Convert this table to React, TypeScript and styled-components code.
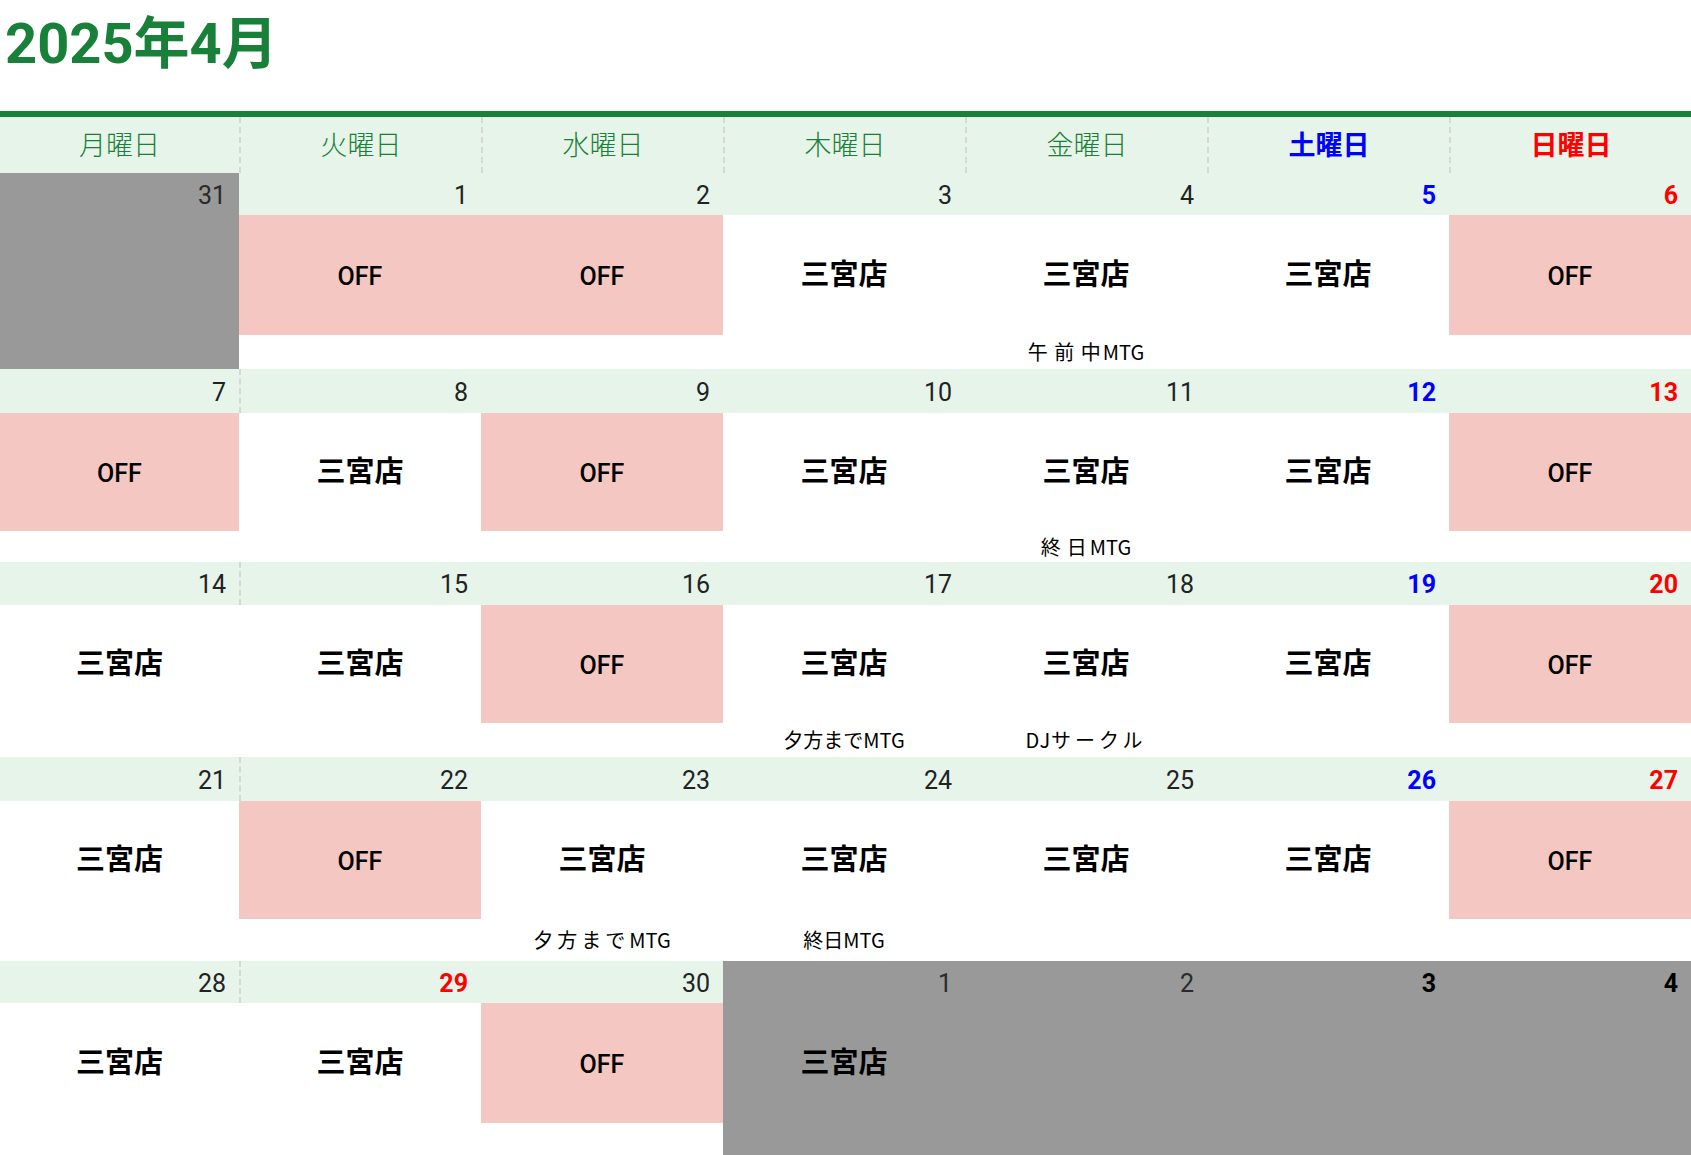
import React from 'react';
import styled, { createGlobalStyle } from 'styled-components';

const GlobalStyle = createGlobalStyle`
  html, body {
    margin: 0;
    padding: 0;
    background: #ffffff;
    overflow: hidden;
  }
  body {
    font-family: Roboto, "Noto Sans CJK JP", sans-serif;
  }
`;

type Tone = 'normal' | 'sat' | 'sun' | 'strong';
type Shift = 'store' | 'off' | null;

interface NoteSegment {
  text: string;
  spacing: number;
}

interface DayData {
  d: number;
  outside?: boolean;
  tone?: Tone;
  shift: Shift;
  note?: NoteSegment[];
}

interface WeekData {
  band: number;
  content: number;
  note: number;
  days: DayData[];
}

const WEEKDAYS: { label: string; tone: Tone }[] = [
  { label: '月曜日', tone: 'normal' },
  { label: '火曜日', tone: 'normal' },
  { label: '水曜日', tone: 'normal' },
  { label: '木曜日', tone: 'normal' },
  { label: '金曜日', tone: 'normal' },
  { label: '土曜日', tone: 'sat' },
  { label: '日曜日', tone: 'sun' },
];

const WEEKS: WeekData[] = [
  {
    band: 42,
    content: 120,
    note: 34,
    days: [
      { d: 31, outside: true, shift: null },
      { d: 1, shift: 'off' },
      { d: 2, shift: 'off' },
      { d: 3, shift: 'store' },
      {
        d: 4,
        shift: 'store',
        note: [
          { text: '午前', spacing: 6.5 },
          { text: '中', spacing: 2 },
          { text: 'MTG', spacing: 0 },
        ],
      },
      { d: 5, tone: 'sat', shift: 'store' },
      { d: 6, tone: 'sun', shift: 'off' },
    ],
  },
  {
    band: 44,
    content: 118,
    note: 31,
    days: [
      { d: 7, shift: 'off' },
      { d: 8, shift: 'store' },
      { d: 9, shift: 'off' },
      { d: 10, shift: 'store' },
      {
        d: 11,
        shift: 'store',
        note: [
          { text: '終', spacing: 6 },
          { text: '日', spacing: 3 },
          { text: 'MTG', spacing: 0 },
        ],
      },
      { d: 12, tone: 'sat', shift: 'store' },
      { d: 13, tone: 'sun', shift: 'off' },
    ],
  },
  {
    band: 43,
    content: 118,
    note: 34,
    days: [
      { d: 14, shift: 'store' },
      { d: 15, shift: 'store' },
      { d: 16, shift: 'off' },
      { d: 17, shift: 'store', note: [{ text: '夕方までMTG', spacing: 0 }] },
      {
        d: 18,
        shift: 'store',
        note: [
          { text: 'DJ', spacing: 1 },
          { text: 'サークル', spacing: 4 },
        ],
      },
      { d: 19, tone: 'sat', shift: 'store' },
      { d: 20, tone: 'sun', shift: 'off' },
    ],
  },
  {
    band: 44,
    content: 118,
    note: 42,
    days: [
      { d: 21, shift: 'store' },
      { d: 22, shift: 'off' },
      {
        d: 23,
        shift: 'store',
        note: [
          { text: '夕方まで', spacing: 4 },
          { text: 'MTG', spacing: 0 },
        ],
      },
      { d: 24, shift: 'store', note: [{ text: '終日MTG', spacing: 0 }] },
      { d: 25, shift: 'store' },
      { d: 26, tone: 'sat', shift: 'store' },
      { d: 27, tone: 'sun', shift: 'off' },
    ],
  },
  {
    band: 42,
    content: 120,
    note: 32,
    days: [
      { d: 28, shift: 'store' },
      { d: 29, tone: 'sun', shift: 'store' },
      { d: 30, shift: 'off' },
      { d: 1, outside: true, shift: 'store' },
      { d: 2, outside: true, shift: null },
      { d: 3, outside: true, tone: 'strong', shift: null },
      { d: 4, outside: true, tone: 'strong', shift: null },
    ],
  },
];

const GREEN = '#188038';
const LIGHT_GREEN = '#e6f4ea';
const PINK = '#f4c7c3';
const GRAY = '#999999';
const DASH = '2px dashed #d5d8d6';
const COLUMNS = '239px repeat(6, 1fr)';

const toneColor = (t: Tone, fallback: string) =>
  t === 'sat' ? '#0000ff' : t === 'sun' ? '#ff0000' : t === 'strong' ? '#000000' : fallback;

const Page = styled.div`
  width: 100%;
`;

const TitleBar = styled.header`
  height: 111px;
  box-sizing: border-box;
  padding: 16px 0 0 5px;
`;

const Title = styled.h1`
  margin: 0;
  font-family: Roboto, "Noto Sans CJK JP", sans-serif;
  font-weight: 700;
  font-size: 56px;
  line-height: 56px;
  color: ${GREEN};
`;

const Calendar = styled.section`
  border-top: 6px solid ${GREEN};
`;

const HeaderRow = styled.div`
  display: grid;
  grid-template-columns: ${COLUMNS};
  height: 56px;
  background: ${LIGHT_GREEN};
`;

const HeaderCell = styled.div<{ $tone: Tone; $divider: boolean }>`
  display: flex;
  align-items: center;
  justify-content: center;
  box-sizing: border-box;
  padding-bottom: 4px;
  border-left: ${(p) => (p.$divider ? DASH : 'none')};
  font-family: "Noto Sans CJK JP", sans-serif;
  font-size: 27px;
  font-weight: ${(p) => (p.$tone === 'normal' ? 300 : 700)};
  color: ${(p) => toneColor(p.$tone, GREEN)};
`;

const WeekRow = styled.div<{ $band: number; $content: number; $note: number }>`
  display: grid;
  grid-template-columns: ${COLUMNS};
  --band: ${(p) => p.$band}px;
  --content: ${(p) => p.$content}px;
  --note: ${(p) => p.$note}px;
`;

const DayCell = styled.div<{ $outside: boolean }>`
  display: flex;
  flex-direction: column;
  min-width: 0;
  background: ${(p) => (p.$outside ? GRAY : '#ffffff')};
`;

const DateBand = styled.div<{ $outside: boolean; $divider: boolean }>`
  height: var(--band);
  box-sizing: border-box;
  display: flex;
  align-items: center;
  justify-content: flex-end;
  padding-right: 13px;
  background: ${(p) => (p.$outside ? 'transparent' : LIGHT_GREEN)};
  border-left: ${(p) => (p.$divider ? DASH : 'none')};
`;

const DateNum = styled.span<{ $tone: Tone; $outside: boolean }>`
  font-family: Roboto, sans-serif;
  font-size: 25px;
  line-height: 1;
  margin-top: 2px;
  font-weight: ${(p) => (p.$tone === 'normal' ? 400 : 700)};
  color: ${(p) => toneColor(p.$tone, p.$outside ? '#2a2a2a' : '#222222')};
`;

const ShiftArea = styled.div<{ $shift: Shift; $outside: boolean }>`
  height: var(--content);
  display: flex;
  align-items: center;
  justify-content: center;
  background: ${(p) => (p.$outside ? 'transparent' : p.$shift === 'off' ? PINK : '#ffffff')};
  color: #000000;
`;

const StoreLabel = styled.span`
  font-family: "Noto Sans CJK JP", sans-serif;
  font-weight: 700;
  font-size: 29px;
  line-height: 1;
  margin-bottom: 6px;
`;

const OffLabel = styled.span`
  font-family: Roboto, sans-serif;
  font-size: 25px;
  line-height: 1;
  font-weight: 500;
  margin-top: 3px;
`;

const NoteArea = styled.div`
  height: var(--note);
  display: flex;
  align-items: center;
  justify-content: center;
  white-space: nowrap;
  font-family: "Noto Sans CJK JP", sans-serif;
  font-size: 20px;
  line-height: 1;
  color: #000000;
`;

const NoteSeg = styled.span<{ $spacing: number }>`
  letter-spacing: ${(p) => p.$spacing}px;
`;

const Day: React.FC<{ day: DayData; divider: boolean }> = ({ day, divider }) => {
  const outside = !!day.outside;
  const tone = day.tone ?? 'normal';
  return (
    <DayCell $outside={outside}>
      <DateBand $outside={outside} $divider={divider}>
        <DateNum $tone={tone} $outside={outside}>
          {day.d}
        </DateNum>
      </DateBand>
      <ShiftArea $shift={day.shift} $outside={outside}>
        {day.shift === 'store' && <StoreLabel>三宮店</StoreLabel>}
        {day.shift === 'off' && <OffLabel>OFF</OffLabel>}
      </ShiftArea>
      <NoteArea>
        {day.note &&
          day.note.map((s, i) => (
            <NoteSeg key={i} $spacing={s.spacing}>
              {s.text}
            </NoteSeg>
          ))}
      </NoteArea>
    </DayCell>
  );
};

export default function App() {
  return (
    <Page>
      <GlobalStyle />
      <TitleBar>
        <Title>2025年4月</Title>
      </TitleBar>
      <Calendar>
        <HeaderRow>
          {WEEKDAYS.map((w, i) => (
            <HeaderCell key={w.label} $tone={w.tone} $divider={i > 0}>
              {w.label}
            </HeaderCell>
          ))}
        </HeaderRow>
        {WEEKS.map((w, wi) => (
          <WeekRow key={wi} $band={w.band} $content={w.content} $note={w.note}>
            {w.days.map((d, di) => (
              <Day
                key={di}
                day={d}
                divider={di === 1 && !w.days[0].outside && !d.outside}
              />
            ))}
          </WeekRow>
        ))}
      </Calendar>
    </Page>
  );
}
